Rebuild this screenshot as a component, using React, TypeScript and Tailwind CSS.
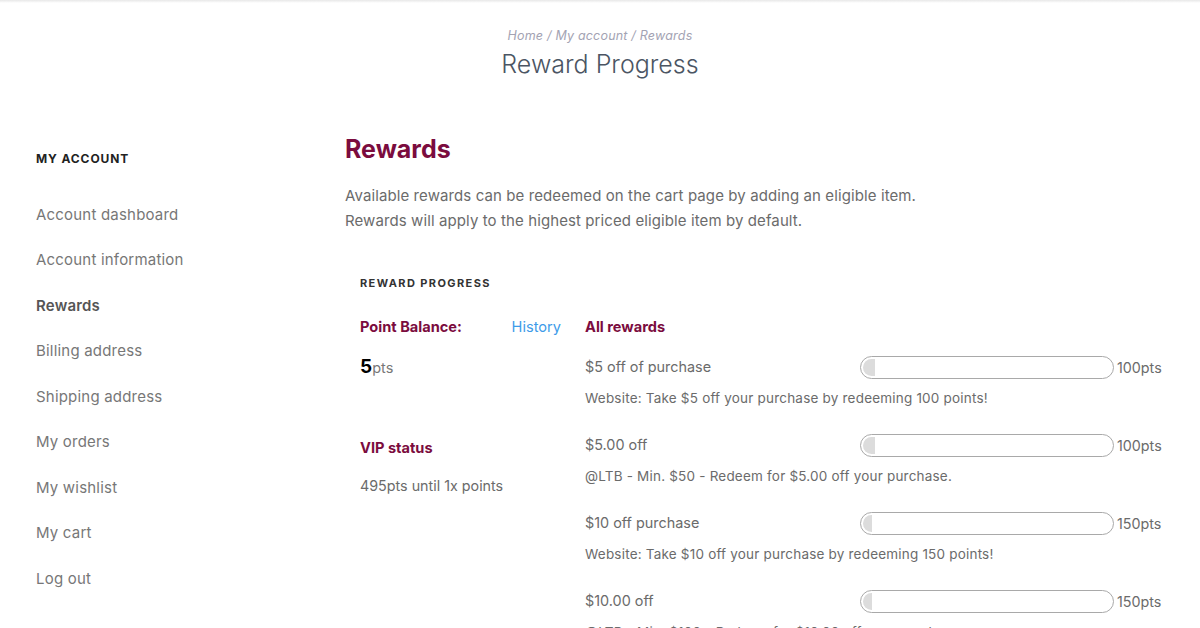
const links = [
  { label: 'Account dashboard' },
  { label: 'Account information' },
  { label: 'Rewards', active: true },
  { label: 'Billing address' },
  { label: 'Shipping address' },
  { label: 'My orders' },
  { label: 'My wishlist' },
  { label: 'My cart' },
  { label: 'Log out' },
]

const rewards = [
  { title: '$5 off of purchase', points: 100, desc: 'Website: Take $5 off your purchase by redeeming 100 points!' },
  { title: '$5.00 off', points: 100, desc: '@LTB - Min. $50 - Redeem for $5.00 off your purchase.' },
  { title: '$10 off purchase', points: 150, desc: 'Website: Take $10 off your purchase by redeeming 150 points!' },
  { title: '$10.00 off', points: 150, desc: '@LTB - Min. $100 - Redeem for $10.00 off your purchase.' },
]

function ProgressBar({ value, max }: { value: number; max: number }) {
  return (
    <div className="w-[254px] h-[23px] rounded-full border-[1.5px] border-[#a9a9a9] bg-white overflow-hidden p-[2px]">
      <div
        className="h-full rounded-l-full bg-[#dcdcdc] min-w-[9px]"
        style={{ width: `${(value / max) * 100}%` }}
      />
    </div>
  )
}

export default function App() {
  return (
    <div className="w-[1200px] h-[628px] overflow-hidden bg-white font-['Inter',sans-serif] relative">
      <div className="h-[3px] bg-gradient-to-b from-[#e8e8e8] to-white" />

      <div className="flex flex-col items-center pt-[24px]">
        <div className="text-[12.5px] italic text-[#a3a3b3] tracking-[0.2px]">Home / My account / Rewards</div>
        <h1 className="mt-[3px] text-[25px] leading-[30px] text-[#4b5563] font-light">Reward Progress</h1>
      </div>

      <div className="flex mt-[55px]">
        <aside className="w-[345px] pl-[36px] shrink-0">
          <div className="text-[12px] font-bold tracking-[0.9px] text-[#222] leading-[20px] mt-[15px]">MY ACCOUNT</div>
          <ul className="mt-[36px] flex flex-col">
            {links.map((l) => (
              <li
                key={l.label}
                className={
                  'h-[45.5px] leading-[20px] text-[15px] tracking-[0.2px] ' +
                  (l.active ? 'font-semibold text-[#555]' : 'text-[#777]')
                }
              >
                {l.label}
              </li>
            ))}
          </ul>
        </aside>

        <main className="flex-1 pr-[36px]">
          <h2 className="text-[25px] leading-[30px] font-bold text-[#7b0c3e]">Rewards</h2>
          <p className="mt-[19px] text-[15px] tracking-[0.1px] leading-[25px] text-[#6b6b6b]">
            Available rewards can be redeemed on the cart page by adding an eligible item.
            <br />
            Rewards will apply to the highest priced eligible item by default.
          </p>

          <div className="pl-[15px] mt-[42px]">
            <div className="text-[11px] font-bold tracking-[1.4px] text-[#333] leading-[16px]">REWARD PROGRESS</div>

            <div className="flex mt-[26px]">
              <div className="w-[225px] shrink-0">
                <div className="flex justify-between pr-[24px] text-[14.6px] leading-[20px]">
                  <span className="font-bold text-[#7b0c3e]">Point Balance:</span>
                  <span className="text-[#3d9be9]">History</span>
                </div>
                <div className="mt-[19px] leading-[22px]">
                  <span className="text-[19px] font-bold text-black">5</span>
                  <span className="text-[14.5px] text-[#777]">pts</span>
                </div>
                <div className="mt-[59px] text-[14.6px] leading-[20px] font-bold text-[#7b0c3e]">VIP status</div>
                <div className="mt-[18px] text-[14.3px] leading-[20px] text-[#6b6b6b]">495pts until 1x points</div>
              </div>

              <div className="flex-1">
                <div className="text-[14.6px] leading-[20px] font-bold text-[#7b0c3e]">All rewards</div>
                <div className="mt-[19px] flex flex-col gap-[26px]">
                  {rewards.map((r) => (
                    <div key={r.title}>
                      <div className="flex items-center h-[23px]">
                        <div className="w-[275px] text-[14.4px] text-[#6b6b6b]">{r.title}</div>
                        <ProgressBar value={5} max={r.points} />
                        <div className="ml-[3px] text-[14.3px] text-[#6b6b6b]">{r.points}pts</div>
                      </div>
                      <div className="mt-[9px] text-[13.5px] tracking-[0.2px] leading-[20px] text-[#6b6b6b]">{r.desc}</div>
                    </div>
                  ))}
                </div>
              </div>
            </div>
          </div>
        </main>
      </div>
    </div>
  )
}
